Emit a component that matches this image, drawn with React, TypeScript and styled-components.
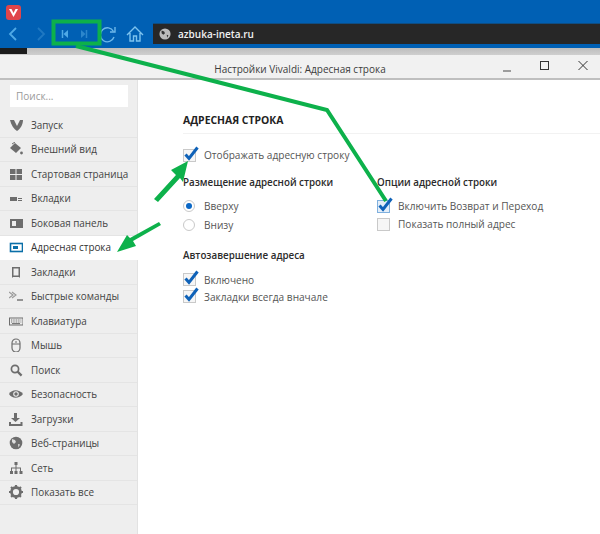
import React from "react";
import styled, { createGlobalStyle } from "styled-components";

const Global = createGlobalStyle`
  html, body { margin: 0; padding: 0; background: #fff; }
  body { font-family: "Open Sans", "Noto Sans", sans-serif; }
`;

const Page = styled.div`
  position: relative;
  width: 600px;
  height: 534px;
  overflow: hidden;
  display: flex;
  flex-direction: column;
  background: #fff;
`;

const BrowserTop = styled.div`
  height: 48px;
  flex: none;
  background: #0060b4;
  display: flex;
  flex-direction: column;
`;

const LogoRow = styled.div`
  height: 23px;
  padding: 3px 0 0 6px;
  box-sizing: border-box;
  flex: none;
`;

const NavRow = styled.div`
  height: 21px;
  display: flex;
  align-items: center;
`;

const NavIcons = styled.div`
  width: 153px;
  flex: none;
  height: 21px;
  display: flex;
  align-items: center;
`;

const NavSlot = styled.span<{ $w: number }>`
  display: flex;
  justify-content: center;
  align-items: center;
  width: ${(p) => p.$w}px;
  flex: none;
`;

const AddressBar = styled.div`
  flex: 1;
  height: 21px;
  background: #272727;
  border-top: 1px solid #0f4d82;
  box-sizing: border-box;
  display: flex;
  align-items: center;
  gap: 7px;
  padding-left: 6px;
  color: #f2f2f2;
  font-size: 10px;
  font-weight: 600;
`;

const Progress = styled.div`
  height: 7px;
  flex: none;
  background: linear-gradient(#bdbdbd, #cfcfcf);
  display: flex;
`;

const ProgressDone = styled.div`
  width: 27px;
  background: #1c1c1c;
  height: 6px;
`;

const TitleBar = styled.div`
  height: 25px;
  flex: none;
  box-sizing: border-box;
  background: #f1f1f1;
  border-bottom: 2px solid #bfbfbf;
  position: relative;
  display: flex;
  align-items: center;
  justify-content: center;
  font-size: 10px;
  color: #3c3c3c;
`;

const TitleText = styled.span`
  padding-top: 4px;
`;

const WinButtons = styled.div`
  position: absolute;
  right: 11px;
  top: 5px;
  display: flex;
  gap: 26px;
  align-items: center;
`;

const Body = styled.div`
  flex: 1;
  display: flex;
  min-height: 0;
`;

const Sidebar = styled.nav`
  width: 137px;
  flex: none;
  background: #eeeeee;
  border-right: 1px solid #e2e2e2;
  padding-top: 5px;
`;

const Search = styled.div`
  width: 118px;
  height: 22px;
  margin: 0 0 6px 10px;
  box-sizing: border-box;
  background: #fff;
  padding: 0 6px;
  font-size: 10px;
  line-height: 22px;
  color: #9a9a9a;
`;

const Row = styled.div<{ $active?: boolean }>`
  height: 24.5px;
  box-sizing: border-box;
  display: flex;
  align-items: center;
  gap: 8px;
  padding-left: 9px;
  font-size: 9.9px;
  white-space: nowrap;
  color: ${(p) => (p.$active ? "#333" : "#444")};
  background: ${(p) => (p.$active ? "#fff" : "transparent")};
  margin-right: ${(p) => (p.$active ? "-1px" : "0")};
  border-bottom: 1px solid ${(p) => (p.$active ? "transparent" : "#e4e4e4")};
`;

const RowIcon = styled.span`
  width: 14px;
  height: 14px;
  flex: none;
  display: flex;
  align-items: center;
  justify-content: center;
`;

const Main = styled.main`
  flex: 1;
  padding: 32px 0 0 45px;
  color: #333;
`;

const Heading = styled.h2`
  margin: 0 0 12px;
  font-size: 10.4px;
  line-height: 16px;
  font-weight: 700;
  color: #222;
  padding-bottom: 5px;
  border-bottom: 1px solid #f2f2f2;
`;

const Columns = styled.div<{ $top: number }>`
  display: grid;
  grid-template-columns: 194px 1fr;
  margin-top: ${(p) => p.$top}px;
`;

const Group = styled.section`
  display: flex;
  flex-direction: column;
  align-items: flex-start;
`;

const GroupTitle = styled.h3<{ $gap: number }>`
  margin: 0 0 ${(p) => p.$gap}px;
  font-size: 9.8px;
  line-height: 16px;
  font-weight: 600;
  color: #2b2b2b;
`;

const OptionRow = styled.div<{ $h?: number }>`
  height: ${(p) => p.$h ?? 18}px;
  display: flex;
  align-items: center;
  gap: 9px;
  font-size: 10.1px;
  color: #555;
  white-space: nowrap;
`;

const Box = styled.span<{ $focus?: boolean }>`
  width: 13px;
  height: 13px;
  margin-right: -1px;
  box-sizing: border-box;
  flex: none;
  background: ${(p) => (p.$focus ? "#e4eef8" : "#f6f6f6")};
  border: 1px solid ${(p) => (p.$focus ? "#7fb0de" : "#c9c9c9")};
  position: relative;
`;

const Tick = styled.svg`
  position: absolute;
  left: -1px;
  top: -5px;
  overflow: visible;
`;

const Radio = styled.span<{ $on?: boolean }>`
  width: 12px;
  height: 12px;
  box-sizing: border-box;
  flex: none;
  border-radius: 50%;
  background: #fff;
  border: 1px solid #c9c9c9;
  display: flex;
  align-items: center;
  justify-content: center;
  &::after {
    content: "";
    width: 6px;
    height: 6px;
    border-radius: 50%;
    background: ${(p) => (p.$on ? "#0b68c6" : "transparent")};
  }
`;

const Overlay = styled.svg`
  position: absolute;
  left: 0;
  top: 0;
  pointer-events: none;
`;

const Check = ({ on, focus }: { on?: boolean; focus?: boolean }) => (
  <Box $focus={focus}>
    {on && (
      <Tick width="16" height="16" viewBox="0 0 16 16">
        <path d="M2.500 9.500L6 13.500L14.500 2.500" fill="none" stroke="#0f62b8" strokeWidth="3" />
      </Tick>
    )}
  </Box>
);

const g = "#6d6d6d";
const icons: Record<string, React.ReactNode> = {
  start: <path d="M1 2h4l3 6 3-6h3c0 5-3 9-6 11C5 11 2 7 1 2z" fill={g} />,
  look: (
    <>
      <path d="M6 1l6 5-5 5-6-5z" fill={g} />
      <path d="M3 2l3-2" stroke={g} fill="none" />
      <circle cx="12.500" cy="11" r="1.400" fill={g} />
    </>
  ),
  grid: <path d="M1 2h5.500v5H1zM7.500 2H13v5H7.500zM1 8h5.500v5H1zM7.500 8H13v5H7.500z" fill={g} />,
  tabs: <path d="M1 6h7v4H1zM9 7h4v1H9zM9 9h4v1H9z" fill={g} />,
  panel: <path fillRule="evenodd" d="M1 3h13v9H1zM3 5v5h4V5z" fill={g} />,
  addr: (
    <>
      <rect x="1.500" y="3.500" width="12" height="8" fill="#fff" stroke="#0a6fa8" strokeWidth="1.600" />
      <rect x="4" y="6" width="5" height="3" fill="#0a6fa8" />
    </>
  ),
  book: <path d="M3 2h8v11l-1-1H4l-1 1z M4.500 3.500v7h5v-7z" fillRule="evenodd" fill={g} />,
  cmd: (
    <>
      <path d="M0 3l4 3-4 3M3 3l4 3-4 3" fill="none" stroke="#999" strokeWidth="1.100" />
      <path d="M8 11h6" stroke={g} strokeWidth="1.400" />
    </>
  ),
  kbd: (
    <>
      <rect x="0.500" y="4" width="13.500" height="7" fill="none" stroke={g} />
      <path d="M2 6h10.500M2 8h10.500" stroke={g} strokeDasharray="1 .7" />
      <path d="M3 9.600h8" stroke={g} />
    </>
  ),
  mouse: (
    <>
      <rect x="3" y="1" width="8" height="13" rx="4" fill="none" stroke={g} strokeWidth="1.200" />
      <path d="M3 6h8M7 3v2" stroke={g} />
    </>
  ),
  search: (
    <>
      <circle cx="6" cy="6" r="3.600" fill="none" stroke={g} strokeWidth="1.700" />
      <path d="M8.600 8.600l4 4" stroke={g} strokeWidth="2.200" />
    </>
  ),
  eye: (
    <>
      <path d="M0 7c3-5 10-5 14 0-4 5-11 5-14 0z" fill={g} />
      <circle cx="7" cy="7" r="2.800" fill="#eee" />
      <circle cx="7" cy="7" r="1.700" fill={g} />
    </>
  ),
  dl: <path d="M5 1h3v5h3L6.500 10 2 6h3zM0 10h2v2h9.500v-2H13.500v4H0z" fill={g} />,
  web: (
    <>
      <circle cx="7" cy="7" r="6.300" fill={g} />
      <path d="M3 3l3 1 1 2-2 2-2-2zM9 8l2 .5-1.500 3z" fill="#ddd" />
    </>
  ),
  net: <path d="M5.500 1h3v3h-1v2.500H12V10h1.500v3h-3v-3H11V7.500H7.500V10H8.500v3h-3v-3h1V7.500H3V10h1v3H1v-3h1V6.500h4.500V4h-1z" fill={g} />,
  all: (
    <>
      <circle cx="7" cy="7" r="4.500" fill="none" stroke={g} strokeWidth="2.800" />
      <path d="M7 0v14M0 7h14M2 2l10 10M12 2L2 12" stroke={g} strokeWidth="2.200" strokeDasharray="2.200 9.600" />
    </>
  ),
};

const items: [string, string][] = [
  ["start", "Запуск"],
  ["look", "Внешний вид"],
  ["grid", "Стартовая страница"],
  ["tabs", "Вкладки"],
  ["panel", "Боковая панель"],
  ["addr", "Адресная строка"],
  ["book", "Закладки"],
  ["cmd", "Быстрые команды"],
  ["kbd", "Клавиатура"],
  ["mouse", "Мышь"],
  ["search", "Поиск"],
  ["eye", "Безопасность"],
  ["dl", "Загрузки"],
  ["web", "Веб-страницы"],
  ["net", "Сеть"],
  ["all", "Показать все"],
];

const NavIcon = ({ children, w }: { children: React.ReactNode; w: number }) => (
  <NavSlot $w={w}>
    <svg width="20" height="18" viewBox="0 0 20 18" fill="none" style={{ flex: "none" }}>
      {children}
    </svg>
  </NavSlot>
);

export default function App() {
  return (
    <Page>
      <Global />
      <BrowserTop>
        <LogoRow>
          <svg width="15" height="15" viewBox="0 0 15 15">
            <rect width="15" height="15" rx="3" fill="#e0454a" />
            <path d="M3 4h2.500l2 4 2-4H12L7.500 12z" fill="#fff" />
          </svg>
        </LogoRow>
        <NavRow>
          <NavIcons>
            <NavIcon w={26}>
              <path d="M13 3L7 9l6 6" stroke="#4fa9e6" strokeWidth="1.800" />
            </NavIcon>
            <NavIcon w={28}>
              <path d="M8 3l6 6-6 6" stroke="#1f78c2" strokeWidth="1.800" />
            </NavIcon>
            <NavIcon w={22}>
              <path d="M7.500 5v8" stroke="#4fa9e6" strokeWidth="1.500" />
              <path d="M13 5v8L8.500 9z" fill="#4fa9e6" />
            </NavIcon>
            <NavIcon w={16}>
              <path d="M12.500 5v8" stroke="#2c86cc" strokeWidth="1.500" />
              <path d="M7 5v8l4.500-4z" fill="#2c86cc" />
            </NavIcon>
            <NavIcon w={32}>
              <path d="M15.500 6.500A7 7 0 1 0 16 12" stroke="#6db8ea" strokeWidth="1.400" />
              <path d="M17 2v5h-5" stroke="#6db8ea" strokeWidth="1.400" />
            </NavIcon>
            <NavIcon w={22}>
              <path d="M2 10l8-8 8 8M5 8v8h3.500v-5h3v5H15V8" stroke="#7cc2ee" strokeWidth="1.400" />
            </NavIcon>
          </NavIcons>
          <AddressBar>
            <svg width="12" height="12" viewBox="0 0 14 14">
              <circle cx="7" cy="7" r="6.500" fill="#bcbcbc" />
              <path d="M3 3l3 1 1 2-2 2-2-2zM9 8l2 .5-1.500 3z" fill="#333" />
            </svg>
            azbuka-ineta.ru
          </AddressBar>
        </NavRow>
      </BrowserTop>
      <Progress>
        <ProgressDone />
      </Progress>
      <TitleBar>
        <TitleText>Настройки Vivaldi: Адресная строка</TitleText>
        <WinButtons>
          <svg width="12" height="12" viewBox="0 0 12 12">
            <path d="M2 11h8" stroke="#666" strokeWidth="1.200" />
          </svg>
          <svg width="12" height="12" viewBox="0 0 12 12">
            <rect x="1.500" y="1.500" width="8" height="8" fill="none" stroke="#333" />
          </svg>
          <svg width="12" height="12" viewBox="0 0 12 12">
            <path d="M1.500 1l9 9M10.500 1l-9 9" stroke="#333" />
          </svg>
        </WinButtons>
      </TitleBar>
      <Body>
        <Sidebar>
          <Search>Поиск...</Search>
          {items.map(([k, label]) => (
            <Row key={k} $active={k === "addr"}>
              <RowIcon>
                <svg width="14" height="14" viewBox="0 0 14 14">
                  {icons[k]}
                </svg>
              </RowIcon>
              {label}
            </Row>
          ))}
        </Sidebar>
        <Main>
          <Heading>АДРЕСНАЯ СТРОКА</Heading>
          <OptionRow>
            <Check on />
            Отображать адресную строку
          </OptionRow>
          <Columns $top={11}>
            <Group>
              <GroupTitle $gap={5}>Размещение адресной строки</GroupTitle>
              <OptionRow $h={19}>
                <Radio $on />
                Вверху
              </OptionRow>
              <OptionRow $h={19}>
                <Radio />
                Внизу
              </OptionRow>
            </Group>
            <Group>
              <GroupTitle $gap={6}>Опции адресной строки</GroupTitle>
              <OptionRow>
                <Check on focus />
                Включить Возврат и Переход
              </OptionRow>
              <OptionRow>
                <Check />
                Показать полный адрес
              </OptionRow>
            </Group>
          </Columns>
          <Columns $top={14}>
            <Group>
              <GroupTitle $gap={7}>Автозавершение адреса</GroupTitle>
              <OptionRow $h={17}>
                <Check on />
                Включено
              </OptionRow>
              <OptionRow $h={17}>
                <Check on />
                Закладки всегда вначале
              </OptionRow>
            </Group>
          </Columns>
        </Main>
      </Body>
      <Overlay width="600" height="534" viewBox="0 0 600 534">
        <rect x="53.500" y="21.500" width="46" height="22" fill="none" stroke="#0db14b" strokeWidth="4" />
        <path d="M76 46L327 110L386 201" fill="none" stroke="#0db14b" strokeWidth="4" />
        <path d="M154 199L176 175L171 170L188 161L183 182L180 178L158 202z" fill="#0db14b" />
        <path d="M161 225L133 241L136 246L117 252L127 235L130 238L159 222z" fill="#0db14b" />
      </Overlay>
    </Page>
  );
}
